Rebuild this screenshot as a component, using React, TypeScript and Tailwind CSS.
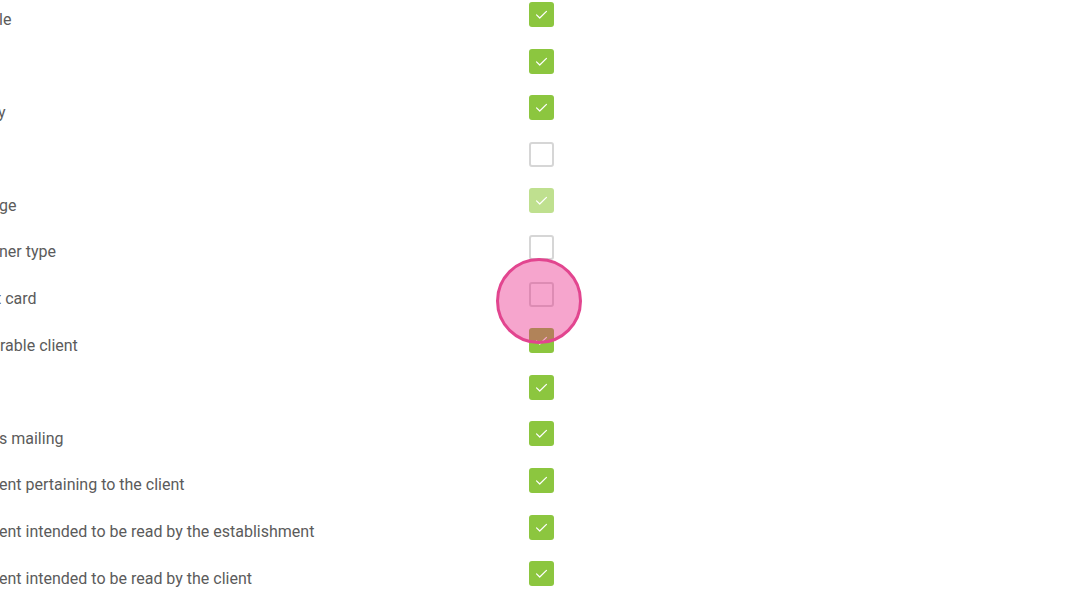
import React from 'react';

interface Field {
  label: string;
  offset: string;
  state: 'on' | 'off' | 'disabled';
}

const fields: Field[] = [
  { label: 'le', offset: '-ml-[1px]', state: 'on' },
  { label: '', offset: '', state: 'on' },
  { label: 'y', offset: '-ml-[2px]', state: 'on' },
  { label: '', offset: '', state: 'off' },
  { label: 'ge', offset: '-ml-[1px]', state: 'disabled' },
  { label: 'ner type', offset: '-ml-[1px]', state: 'off' },
  { label: 't card', offset: '-ml-[4px]', state: 'off' },
  { label: 'rable client', offset: 'ml-0', state: 'on' },
  { label: '', offset: '', state: 'on' },
  { label: 's mailing', offset: '-ml-[1px]', state: 'on' },
  { label: 'ent pertaining to the client', offset: '-ml-[1px]', state: 'on' },
  { label: 'ent intended to be read by the establishment', offset: '-ml-[1px]', state: 'on' },
  { label: 'ent intended to be read by the client', offset: '-ml-[1px]', state: 'on' },
];

function Checkbox({ state }: { state: Field['state'] }) {
  if (state === 'off') {
    return <span className="block w-[25px] h-[25px] rounded-[3px] border-2 border-[#d6d6d6] bg-white" />;
  }
  return (
    <span
      className={`flex items-center justify-center w-[25px] h-[25px] rounded-[3px] ${
        state === 'on' ? 'bg-[#8cc63f]' : 'bg-[#bfe08f]'
      }`}
    >
      <svg viewBox="0 0 24 24" className="w-[17px] h-[17px]" fill="none" stroke="white" strokeWidth="1.7" strokeLinecap="round" strokeLinejoin="round">
        <path d="M5 12.5l4.5 4.5L19 7.5" />
      </svg>
    </span>
  );
}

export default function App() {
  return (
    <div className="relative w-[1075px] h-[601px] overflow-hidden bg-white font-['Roboto',sans-serif]">
      <div className="-mt-[8.8px] flex flex-col">
        {fields.map((f, i) => (
          <div key={i} className="flex items-center h-[46.6px]">
            <div className="w-[529px] shrink-0 overflow-hidden whitespace-nowrap">
              <span className={`block pt-[10px] text-[16px] leading-6 text-[#5b5b5b] ${f.offset}`}>{f.label}</span>
            </div>
            <Checkbox state={f.state} />
          </div>
        ))}
      </div>
      {/* click highlight */}
      <div className="absolute left-[496px] top-[258px] w-[86px] h-[86px] rounded-full bg-[rgba(233,30,130,0.4)] border-[3px] border-[#e2458f]" />
    </div>
  );
}
